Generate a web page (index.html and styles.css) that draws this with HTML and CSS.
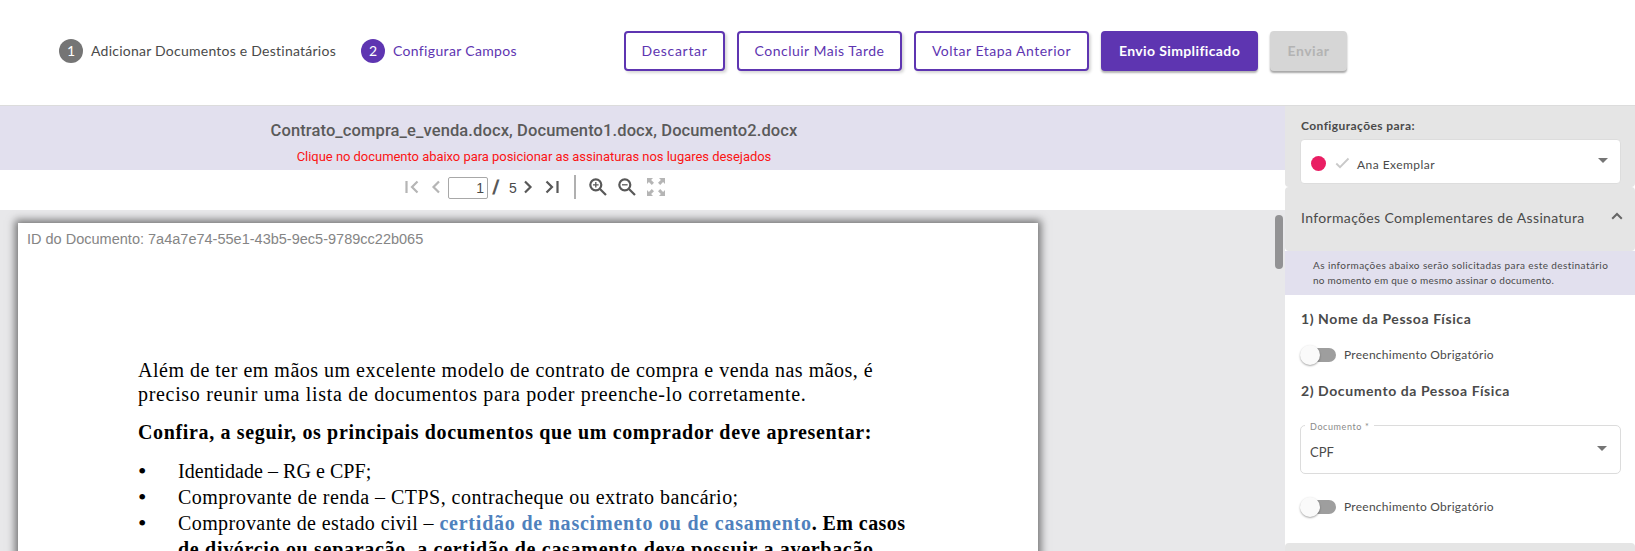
FILE: index.html
```html
<!DOCTYPE html>
<html lang="pt-BR">
<head>
<meta charset="utf-8">
<title>Configurar Campos</title>
<link rel="stylesheet" href="styles.css">
</head>
<body>
<header class="header">
  <div class="step step-one"><span class="badge">1</span><span class="t-step1">Adicionar Documentos e Destinatários</span></div>
  <div class="step step-two"><span class="badge">2</span><span class="t-step2">Configurar Campos</span></div>
  <div class="actions">
    <button class="btn b-discard">Descartar</button>
    <button class="btn b-later">Concluir Mais Tarde</button>
    <button class="btn b-back">Voltar Etapa Anterior</button>
    <button class="btn solid b-simple">Envio Simplificado</button>
    <button class="btn disabled b-send">Enviar</button>
  </div>
</header>
<div class="main">
  <main class="viewer">
    <div class="doc-head">
      <div class="doc-title">Contrato_compra_e_venda.docx, Documento1.docx, Documento2.docx</div>
      <div class="doc-hint">Clique no documento abaixo para posicionar as assinaturas nos lugares desejados</div>
    </div>
    <div class="toolbar">
      <svg class="i-first" width="14" height="14" viewBox="0 0 14 14"><path d="M1.500 1v12M12.500 1.500 7 7l5.500 5.500"/></svg>
      <svg class="i-prev" width="10" height="14" viewBox="0 0 10 14"><path d="M8 1.500 2.500 7 8 12.500"/></svg>
      <span class="page-input">1</span>
      <span class="slash">/</span>
      <span class="total">5</span>
      <svg class="i-next dark" width="10" height="14" viewBox="0 0 10 14"><path d="M2 1.500 7.500 7 2 12.500"/></svg>
      <svg class="i-last dark" width="14" height="14" viewBox="0 0 14 14"><path d="M12.500 1v12M1.500 1.500 7 7l-5.500 5.500"/></svg>
      <span class="divider"></span>
      <svg class="i-in dark" width="18" height="18" viewBox="0 0 18 18"><circle cx="6.800" cy="6.800" r="5.500"/><path d="m11 11 6 6"/><path class="thin" d="M4 6.800h5.600M6.800 4v5.600"/></svg>
      <svg class="i-out dark" width="18" height="18" viewBox="0 0 18 18"><circle cx="6.800" cy="6.800" r="5.500"/><path d="m11 11 6 6"/><path class="thin" d="M4 6.800h5.600"/></svg>
      <svg class="i-full" width="20" height="20" viewBox="0 0 20 20"><path class="fill" d="M1 1h6L5.100 2.900 8 5.800 5.800 8 2.900 5.100 1 7zM19 1v6l-1.900-1.900L14.200 8 12 5.800l2.900-2.900L13 1zM1 19v-6l1.900 1.900L5.800 12 8 14.200l-2.900 2.900L7 19zM19 19h-6l1.900-1.900-2.900-2.900 2.200-2.200 2.900 2.900L19 13z"/></svg>
    </div>
    <div class="canvas">
      <article class="page">
        <div class="doc-id">ID do Documento: 7a4a7e74-55e1-43b5-9ec5-9789cc22b065</div>
        <div class="text">
          <p><span class="l1">Além de ter em mãos um excelente modelo de contrato de compra e venda nas mãos, é</span><br><span class="l2">preciso reunir uma lista de documentos para poder preenche-lo corretamente.</span></p>
          <p class="strong"><span class="l3">Confira, a seguir, os principais documentos que um comprador deve apresentar:</span></p>
          <ul>
            <li><span class="l4">Identidade – RG e CPF;</span></li>
            <li><span class="l5">Comprovante de renda – CTPS, contracheque ou extrato bancário;</span></li>
            <li><span class="l6">Comprovante de estado civil – </span><b class="l7"><span class="link">certidão de nascimento ou de casamento</span>. Em casos</b><br><b class="l8">de divórcio ou separação, a certidão de casamento deve possuir a averbação</b></li>
          </ul>
        </div>
      </article>
      <div class="scroll"></div>
    </div>
  </main>
  <aside class="side">
    <section class="recipient">
      <div class="side-label">Configurações para:</div>
      <div class="select">
        <span class="dot"></span>
        <svg class="check" width="15" height="12" viewBox="0 0 15 12"><path d="m1.300 6.500 3.700 3.700L13.500 1.500"/></svg>
        <span class="name">Ana Exemplar</span>
        <svg class="caret" width="10" height="5" viewBox="0 0 10 5"><path d="M0 0h10L5 5z"/></svg>
      </div>
    </section>
    <section class="accordion">
      <span class="acc-title">Informações Complementares de Assinatura</span>
      <svg class="chev" width="12" height="8" viewBox="0 0 12 8"><path d="m1.200 6.800 4.800-4.800 4.800 4.800"/></svg>
    </section>
    <div class="info"><div class="n1">As informações abaixo serão solicitadas para este destinatário</div><div class="n2">no momento em que o mesmo assinar o documento.</div></div>
    <section class="form">
      <h2 class="h-name">1) Nome da Pessoa Física</h2>
      <div class="toggle"><span class="track"><span class="thumb"></span></span><span class="t-req">Preenchimento Obrigatório</span></div>
      <h2 class="h-doc">2) Documento da Pessoa Física</h2>
      <div class="field"><span class="legend">Documento *</span><span class="value">CPF</span>
        <svg class="caret" width="10" height="5" viewBox="0 0 10 5"><path d="M0 0h10L5 5z"/></svg></div>
      <div class="toggle"><span class="track"><span class="thumb"></span></span><span class="t-req">Preenchimento Obrigatório</span></div>
    </section>
    <section class="next-panel"></section>
  </aside>
</div>
</body>
</html>
```
FILE: styles.css
```css
* { box-sizing: border-box; }
body { margin: 0; width: 1635px; height: 551px; overflow: hidden; display: flex; flex-direction: column; background: #fff; font-family: Lato, sans-serif; font-size: 14px; color: #4a4a4a; white-space: nowrap; }
svg { display: block; flex: none; }

.header { height: 106px; flex: none; display: flex; align-items: flex-start; padding: 31px 0 0 59px; border-bottom: 1px solid #dcdcdc; }
.step { display: flex; align-items: center; height: 40px; gap: 8px; }
.step-one { width: 302px; }
.step-two { width: 263px; color: #5e35b1; }
.badge { width: 24px; height: 24px; border-radius: 50%; background: #757575; color: #fff; text-align: center; line-height: 23px; }
.step-two .badge { background: #5e35b1; }
.t-step1, .t-step2 { padding-bottom: 1px; }
.t-step1 { letter-spacing: .24px; }
.t-step2 { letter-spacing: .34px; }
.actions { display: flex; gap: 12px; }
.btn { height: 40px; padding: 0 0 2px; border: 2px solid #5e35b1; border-radius: 4px; background: #fff; color: #5e35b1; font: 14px Lato, sans-serif; letter-spacing: .5px; box-shadow: 2px 2px 3px rgba(0,0,0,.16); }
.btn.solid { background: #5e35b1; color: #fff; font-weight: 700; letter-spacing: .38px; box-shadow: 0 2px 2px rgba(0,0,0,.3); }
.btn.disabled { background: #d6d6d6; border-color: #d6d6d6; color: #b3b3b3; font-weight: 700; box-shadow: 0 2px 2px rgba(0,0,0,.35); }
.btn.b-discard { width: 101px; letter-spacing: .7px; }
.b-later { width: 165px; }
.b-back { width: 175px; }
.b-simple { width: 157px; }
.b-send { width: 77px; }

.main { display: flex; flex: 1; min-height: 0; }
.viewer { width: 1285px; display: flex; flex-direction: column; }
.doc-head { height: 64px; flex: none; background: #e2e0ee; padding: 13px 217px 0 0; text-align: center; font-family: Roboto, sans-serif; }
.doc-title { height: 24px; line-height: 24px; font-size: 16.500px; font-weight: 500; color: #5a5a5a; letter-spacing: .11px; }
.doc-hint { height: 24px; line-height: 27px; font-size: 13px; color: #fb1414; letter-spacing: -.04px; }
.toolbar { height: 40px; flex: none; display: flex; align-items: flex-start; padding: 0 0 0 405px; font-family: "Liberation Sans", sans-serif; }
.toolbar svg { fill: none; stroke: #b5b5b5; stroke-width: 2.200px; margin-top: 10px; }
.toolbar svg.dark { stroke: #585858; }
.toolbar .thin { stroke-width: 1.300px; }
.toolbar .fill { fill: #b5b5b5; stroke: none; }
.toolbar .i-prev { margin-left: 12px; }
.page-input { width: 40px; height: 22px; margin: 7px 0 0 7px; border: 1px solid #a8a8a8; border-radius: 2px; font-size: 14px; line-height: 20px; text-align: right; padding-right: 3px; }
.slash { width: 16px; margin-left: 5px; font-size: 20px; line-height: 34px; font-weight: 700; color: #585858; transform: skewX(-8deg); }
.total { width: 14px; font-size: 14px; line-height: 36px; }
.toolbar .i-last { margin-left: 12px; }
.divider { width: 2px; height: 24px; margin: 5px 0 0 15px; background: #b0b0b0; }
.toolbar .i-in { margin: 8px 0 0 13px; }
.toolbar .i-out { margin: 8px 0 0 11px; }
.toolbar .i-full { margin: 7px 0 0 10px; }
.canvas { flex: 1; min-height: 0; display: flex; overflow: hidden; background: #e8e8ea; padding: 13px 0 0 18px; }
.page { width: 1020px; height: 600px; flex: none; background: #fff; box-shadow: 0 0 8px 3px rgba(0,0,0,.5); padding: 6px 0 0 9px; color: #000; }
.doc-id { font: 14.520px/20px "Liberation Sans", sans-serif; color: #858585; }
.text { margin: 109px 0 0 111px; font: 20px/24px "Liberation Serif", serif; }
.text p { margin: 0 0 14px; }
.text .strong { font-weight: 700; }
.text ul { margin: 0; padding: 0 0 0 40px; line-height: 26px; }
.text li { list-style: none; white-space: pre; line-height: 26px; }
.text li::before { content: "•"; display: inline-block; width: 40px; margin-left: -40px; font-size: 24px; line-height: 20px; transform: translateY(1px); }
.l1 { letter-spacing: .5px; }
.l2 { letter-spacing: .68px; }
.l3 { letter-spacing: .65px; }
.l4 { letter-spacing: .05px; }
.l5 { letter-spacing: .47px; }
.l6 { letter-spacing: .4px; }
.l7 { letter-spacing: .42px; }
.l8 { letter-spacing: .69px; }
.link { color: #4f81bd; letter-spacing: .78px; }
.scroll { width: 8px; height: 54px; margin: -8px 0 0 237px; border-radius: 4px; background: #929294; }

.side { width: 350px; display: flex; flex-direction: column; background: #fff; }
.recipient { height: 81px; flex: none; background: #e5e5e5; padding: 12px 14px 0 15px; border-radius: 0 0 4px 4px; }
.side-label { height: 21px; line-height: 16px; padding-left: 1px; font-size: 12px; font-weight: 700; letter-spacing: .42px; }
.select { height: 45px; display: flex; align-items: center; padding: 0 12px 0 10px; background: #fff; border: 1px solid #ddd; border-radius: 4px; }
.dot { width: 15px; height: 15px; margin-top: 3px; border-radius: 50%; background: #e91e63; }
.check { margin: 2px 7px 0 9px; fill: none; stroke: #c9c9c9; stroke-width: 1.800px; }
.name { font-size: 12px; margin-top: 6px; letter-spacing: .45px; }
.caret { fill: #757575; margin: -3px 0 0 auto; }
.accordion { height: 64px; flex: none; display: flex; align-items: center; padding: 0 12px 4px 16px; background: #e5e5e5; border-radius: 4px; }
.acc-title { letter-spacing: .35px; }
.chev { margin: -2px 0 0 auto; fill: none; stroke: #666; stroke-width: 2px; }
.info { height: 44px; flex: none; padding: 7px 0 0 28px; background: #e2e0ee; font-size: 10px; line-height: 15px; }
.n1 { letter-spacing: .41px; }
.n2 { letter-spacing: .26px; }
.form { height: 248px; flex: none; padding: 14px 14px 0 15px; }
.form h2 { margin: 0 0 0 1px; font-size: 14px; line-height: 20px; font-weight: 700; letter-spacing: .58px; }
.toggle { display: flex; align-items: center; height: 20px; gap: 8px; margin-top: 16px; font-size: 12px; letter-spacing: .25px; }
.t-req { padding-bottom: 1px; }
.track { width: 34px; height: 14px; margin-left: 2px; border-radius: 7px; background: #9e9e9e; display: flex; align-items: center; }
.thumb { width: 20px; height: 20px; margin-left: -2px; flex: none; border-radius: 50%; background: #fafafa; box-shadow: 0 1px 2px rgba(0,0,0,.35); }
.form .h-doc { margin-top: 16px; }
.field { position: relative; height: 49px; margin: 24px 0 23px; display: flex; align-items: center; border: 1px solid #dcdcdc; border-radius: 5px; padding: 0 13px 0 9px; }
.legend { position: absolute; left: 4px; top: -5px; padding: 0 5px; background: #fff; font-size: 9px; line-height: 12px; color: #8a8a8a; letter-spacing: .6px; }
.value { font-size: 13px; margin-top: 5px; }
.next-panel { flex: 1; background: #e5e5e5; border-radius: 4px 4px 0 0; }
```
